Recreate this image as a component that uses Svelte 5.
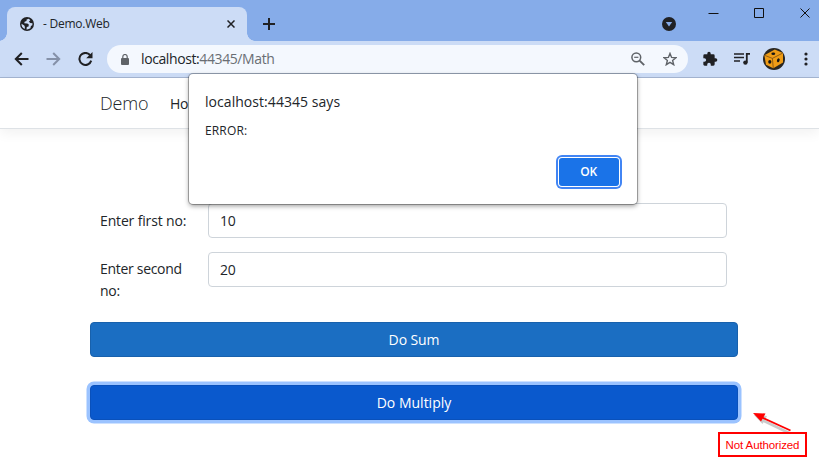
<script>
  const fields = [
    { id: 'first', label: 'Enter first no:', value: '10' },
    { id: 'second', label: 'Enter second no:', value: '20' }
  ];
</script>

<div class="window">
  <header class="titlebar">
    <div class="tab">
      <svg class="globe" width="14" height="14" viewBox="0 0 14 14">
        <circle cx="7" cy="7" r="7" fill="#202124" />
        <path d="M8.8 1.8 6.6 2.6 6.5 4.1 4.6 4.7 4.3 6.2 7.3 6.4 8.8 7.6 8.5 9.4 6.8 10 6.5 12.4A5.6 5.6 0 0 0 10.400 11.300L10.900 9 12.300 8.300 12.500 6.300 10.300 5.900 8.800 4.700 10.300 3.300ZM1.500 6.700 4.300 8.400 4.900 10 4.700 12A5.600 5.600 0 0 1 1.500 6.700Z" fill="#ccdcf6" />
      </svg>
      <span class="tab-title">- Demo.Web</span>
      <svg width="8" height="8" viewBox="0 0 8 8"><path d="M.5.5l7 7M7.5.5l-7 7" stroke="#202124" stroke-width="1.5" /></svg>
    </div>
    <svg class="plus" width="12" height="12" viewBox="0 0 12 12"><path d="M6 0v12M0 6h12" stroke="#202124" stroke-width="2" /></svg>
    <svg class="search-tabs" width="14" height="14" viewBox="0 0 14 14"><circle cx="7" cy="7" r="7" fill="#202124" /><path d="M3.8 5h6.4L7 9.6z" fill="#86ace9" /></svg>
    <div class="controls">
      <svg width="11" height="11" viewBox="0 0 11 11"><path d="M.5 5.5h10" stroke="#111" /></svg>
      <svg width="11" height="11" viewBox="0 0 11 11"><path d="M.5.5h9v9h-9z" fill="none" stroke="#111" /></svg>
      <svg width="11" height="11" viewBox="0 0 11 11"><path d="M.5.5l9 9M9.5.5l-9 9" stroke="#111" /></svg>
    </div>
  </header>

  <div class="toolbar">
    <div class="nav">
      <svg width="15" height="14" viewBox="0 0 15 14"><path d="M14.5 7H2M7.8 1 1.8 7l6 6" fill="none" stroke="#202124" stroke-width="2" /></svg>
      <svg width="15" height="14" viewBox="0 0 15 14"><path d="M.5 7H13M7.2 1l6 6-6 6" fill="none" stroke="#8591a8" stroke-width="2" /></svg>
      <svg width="15" height="14" viewBox="0 0 15 14"><path d="M12.3 3.4A6 6 0 1 0 13.2 8.6" fill="none" stroke="#202124" stroke-width="2" /><path d="M14.5 0v6.3H8.2z" fill="#202124" /></svg>
    </div>
    <div class="omnibox">
      <svg width="8" height="11" viewBox="0 0 8 11"><path d="M1.8 5V2.7a2.2 2.2 0 0 1 4.4 0V5" fill="none" stroke="#5f6368" stroke-width="1.2" /><rect y="4" width="8" height="7" rx="1" fill="#5f6368" /></svg>
      <span class="url">localhost:<span>44345/Math</span></span>
      <svg class="zoom" width="14" height="14" viewBox="0 0 14 14"><circle cx="5.3" cy="5.3" r="4.4" fill="none" stroke="#5f6368" stroke-width="1.5" /><path d="M8.6 8.6l4.6 4.6" stroke="#5f6368" stroke-width="1.9" /><path d="M3.2 5.3h4.2" stroke="#5f6368" stroke-width="1.2" /></svg>
      <svg width="14" height="14" viewBox="0 0 14 14"><path d="M7 1.4l1.6 4 4.3.3-3.3 2.8 1.1 4.2L7 10.4l-3.7 2.3 1.1-4.2L1.1 5.7l4.3-.3z" fill="none" stroke="#5f6368" stroke-width="1.4" /></svg>
    </div>
    <div class="actions">
      <svg width="16" height="16" viewBox="0 0 24 24"><path fill="#202124" d="M20.5 11H19V7a2 2 0 0 0-2-2h-4V3.5a2.5 2.5 0 0 0-5 0V5H4a2 2 0 0 0-2 2v3.8h1.5a2.7 2.7 0 0 1 0 5.4H2V20c0 1.1.9 2 2 2h3.8v-1.5a2.7 2.7 0 0 1 5.4 0V22H17a2 2 0 0 0 2-2v-4h1.5a2.5 2.5 0 0 0 0-5z" /></svg>
      <svg width="16" height="14" viewBox="0 0 16 14"><path d="M0 2h10M0 5.5h10M0 9h6" stroke="#202124" stroke-width="1.7" /><path d="M12.8 10.5V1.8H16" fill="none" stroke="#202124" stroke-width="1.8" /><circle cx="11.4" cy="10.6" r="2.2" fill="#202124" /></svg>
      <svg width="22" height="22" viewBox="0 0 22 22">
        <circle cx="11" cy="11" r="11" fill="#292621" />
        <path d="M11.800 1.500 20 4.900 20 14.600 10.300 20.300 3 16.700 1.400 7.200z" fill="#ef9c16" />
        <path d="M1.400 7.200l8 3.200L20 4.900M9.400 10.400l.9 9.900" fill="none" stroke="#6b4311" stroke-width=".7" />
        <ellipse cx="10.300" cy="5.800" rx="1.900" ry="1.200" fill="#151515" /><ellipse cx="6.800" cy="13.800" rx="1.600" ry="1.900" fill="#151515" /><ellipse cx="15.300" cy="12.300" rx="1.300" ry="2" fill="#151515" transform="rotate(20 15.300 12.300)" />
      </svg>
      <svg width="4" height="14" viewBox="0 0 4 14"><g fill="#202124"><circle cx="2" cy="2" r="1.6" /><circle cx="2" cy="7" r="1.6" /><circle cx="2" cy="12" r="1.6" /></g></svg>
    </div>
  </div>

  <nav class="navbar"><span class="brand">Demo</span><span class="link">Ho</span></nav>

  <main>
    {#each fields as field (field.id)}
      <div class="row">
        <label for={field.id}>{field.label}</label>
        <input id={field.id} type="text" value={field.value} />
      </div>
    {/each}
    <button class="sum">Do Sum</button>
    <button class="multiply">Do Multiply</button>
  </main>

  <div class="dialog" role="alertdialog">
    <div class="heading">localhost:44345 says</div>
    <div class="message">ERROR:</div>
    <button class="ok">OK</button>
  </div>

  <svg class="arrow" width="46" height="26" viewBox="0 0 46 26">
    <g transform="translate(1 2)" opacity=".25"><path d="M10 7l28 13.500" stroke="#333" stroke-width="2.500" /><path d="M2 2l13 1-4.500 8z" fill="#333" /></g>
    <path d="M10 6l29.500 13.500" stroke="#f00" stroke-width="1.800" /><path d="M2 2l12.500.500-4.500 8z" fill="#f00" />
  </svg>
  <div class="note"><span>Not Authorized</span></div>
</div>

<style>
  :global(body) { margin: 0; }
  .window { position: relative; width: 819px; height: 462px; overflow: hidden; background: #fff; color: #212529; font-family: "Open Sans", "Noto Sans", sans-serif; }
  svg { display: block; flex: none; }
  button, input { font: inherit; box-sizing: border-box; }
  span, label, .heading, .message, .note { white-space: nowrap; }
  .titlebar { display: flex; align-items: flex-start; height: 41px; background: #86ace9; }
  .tab { position: relative; display: flex; align-items: center; box-sizing: border-box; width: 240px; height: 34px; margin: 7px 0 0 7px; padding: 0 12px 0 13px; border-radius: 8px 8px 0 0; background: #ccdcf6; }
  .tab::before, .tab::after { content: ""; position: absolute; bottom: 0; width: 8px; height: 8px; }
  .tab::before { left: -8px; background: radial-gradient(circle at 0 0, transparent 7.500px, #ccdcf6 8px); }
  .tab::after { right: -8px; background: radial-gradient(circle at 100% 0, transparent 7.500px, #ccdcf6 8px); }
  .tab-title { flex: 1; margin-left: 9px; padding-bottom: 1px; font-size: 12px; letter-spacing: -.25px; }
  .plus { margin: 18px 0 0 16px; }
  .search-tabs { margin: 17px 0 0 387px; }
  .controls { display: flex; gap: 35px; margin: 8px 0 0 32px; }
  .toolbar { display: flex; align-items: center; box-sizing: border-box; height: 37px; border-bottom: 1px solid #a4b5d1; background: #ccdcf6; }
  .nav { display: flex; gap: 17px; width: 93.500px; margin-left: 13.500px; }
  .omnibox { display: flex; align-items: center; box-sizing: border-box; width: 581px; height: 28px; padding: 0 11px 0 14px; border-radius: 14px; background: #f4f8fe; }
  .url { flex: 1; margin-left: 12px; padding-bottom: 1px; font-size: 14px; letter-spacing: -.4px; }
  .url span { color: #6a6e74; }
  .zoom { margin-right: 18px; }
  .actions { display: flex; align-items: center; margin-left: 14px; }
  .actions svg:nth-child(2) { margin-left: 16px; }
  .actions svg:nth-child(3) { margin-left: 13px; }
  .actions svg:nth-child(4) { margin-left: 19px; }
  .navbar { display: flex; align-items: center; box-sizing: border-box; height: 51px; padding-left: 100px; border-bottom: 1px solid #dee2e6; box-shadow: 0 4px 12px rgba(0, 0, 0, .06); }
  .brand { width: 70px; font-size: 18px; font-weight: 300; letter-spacing: -.2px; }
  .link { font-size: 14px; letter-spacing: -.2px; }
  main { display: flex; flex-direction: column; width: 648px; margin-left: 90px; padding-top: 74px; font-size: 14px; }
  .row { display: flex; align-items: flex-start; height: 49px; }
  .row:nth-child(2) { height: 70px; }
  .row label { width: 97px; margin-left: 10px; padding: 7px 8px 0 0; box-sizing: border-box; line-height: 22px; letter-spacing: -.3px; white-space: normal; margin-right: 11px; }
  .row:first-child label { letter-spacing: -.15px; }
  .row:nth-child(2) label { padding-top: 6px; }
  .row input { width: 519px; height: 35px; padding: 0 11px; border: 1px solid #ced4da; border-radius: 4px; background: #fff; color: #212529; outline: 0; letter-spacing: -.2px; }
  main button { height: 35px; padding: 0; border: 1px solid #1861ac; border-radius: 4px; background: #1b6ec2; color: #fff; }
  .sum { letter-spacing: -.1px; }
  .multiply { margin-top: 28px; border-color: #0a51bb; background: #0a59cd; box-shadow: 0 0 0 3.500px #9bc3ff; }
  .dialog { position: absolute; left: 189px; top: 74px; box-sizing: border-box; width: 448px; height: 130px; padding: 17px 16px; border-radius: 4px; background: #fff; box-shadow: 0 0 0 1px rgba(0, 0, 0, .28), 0 2px 5px rgba(0, 0, 0, .4); }
  .heading { height: 22px; line-height: 22px; font-size: 14px; letter-spacing: .05px; }
  .message { margin-top: 8px; height: 20px; line-height: 20px; font-size: 12px; letter-spacing: .15px; }
  .ok { display: block; width: 60px; height: 28px; margin: 17px 2px 0 auto; padding: 0 1px 1px 0; border: 0; border-radius: 3px; background: #1a73e8; color: #fff; font-size: 12px; font-weight: 600; letter-spacing: -.2px; box-shadow: 0 0 0 1px #fff, 0 0 0 3px #4285f4; }
  .arrow { position: absolute; left: 751px; top: 411px; }
  .note { position: absolute; left: 718px; top: 432px; box-sizing: border-box; width: 89px; height: 25px; border: 2px solid #f00; background: #fff; color: #f00; font: 11.500px/22px "Liberation Sans", Arial, sans-serif; letter-spacing: -.12px; text-align: center; }
</style>
